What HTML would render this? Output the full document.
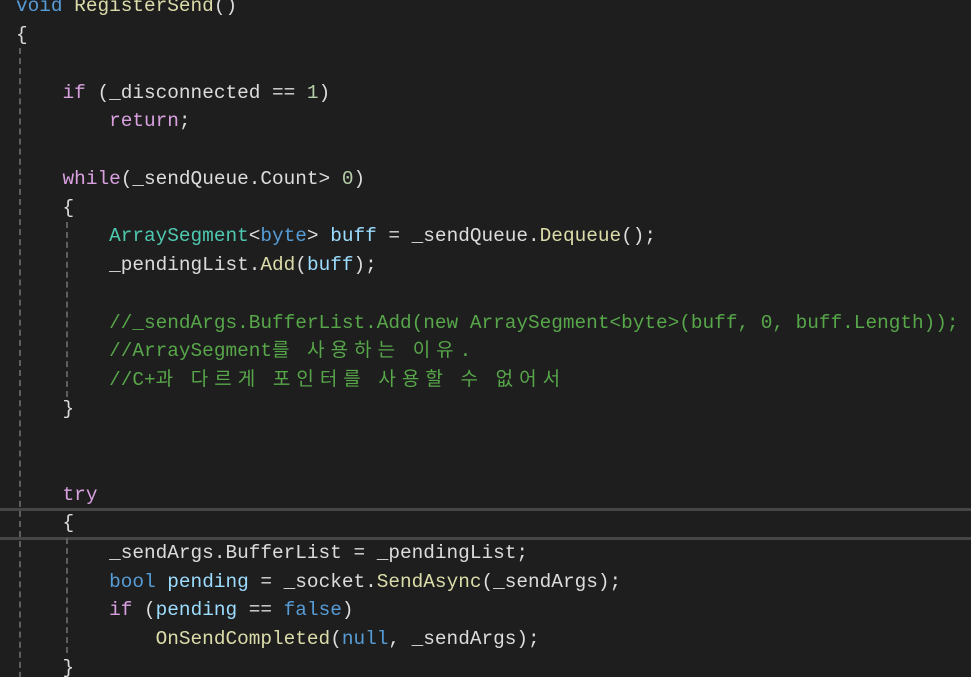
<!DOCTYPE html>
<html><head><meta charset="utf-8"><style>
html,body{margin:0;padding:0;background:#1e1e1e;width:971px;height:677px;overflow:hidden}
body{position:relative;font-family:"Liberation Mono","Noto Sans CJK KR",monospace;font-size:19.4px;color:#dcdcdc}
.l{position:absolute;left:16px;white-space:pre;height:29px;line-height:29px}
.k{color:#569cd6}.c{color:#d8a0df}.t{color:#4ec9b0}.m{color:#dcdcaa}.g{color:#57a64a}.n{color:#b5cea8}.v{color:#9cdcfe}
.h{font-family:"Noto Sans CJK KR",sans-serif;font-size:19px;letter-spacing:6px;line-height:0}
.d{position:absolute;width:0;border-left:2px dashed #5e5e5e}
.cur{position:absolute;left:0;width:971px;top:508px;height:26px;border-top:3px solid #464646;border-bottom:3px solid #464646}
</style></head><body>
<div class="cur"></div>
<div class="d" style="left:19px;top:48px;height:640px"></div>
<div class="d" style="left:66px;top:222px;height:175px"></div>
<div class="d" style="left:66px;top:538px;height:115px"></div>
<div class="l" style="top:-8px"><span class="k">void</span> <span class="m">RegisterSend</span>()</div>
<div class="l" style="top:21px">{</div>
<div class="l" style="top:79px">    <span class="c">if</span> (_disconnected == <span class="n">1</span>)</div>
<div class="l" style="top:107px">        <span class="c">return</span>;</div>
<div class="l" style="top:165px">    <span class="c">while</span>(_sendQueue.Count&gt; <span class="n">0</span>)</div>
<div class="l" style="top:194px">    {</div>
<div class="l" style="top:222px">        <span class="t">ArraySegment</span>&lt;<span class="k">byte</span>&gt; <span class="v">buff</span> = _sendQueue.<span class="m">Dequeue</span>();</div>
<div class="l" style="top:251px">        _pendingList.<span class="m">Add</span>(<span class="v">buff</span>);</div>
<div class="l g" style="top:309px">        //_sendArgs.BufferList.Add(new ArraySegment&lt;byte&gt;(buff, 0, buff.Length));</div>
<div class="l g" style="top:337px">        //ArraySegment<span class="h">를</span> <span class="h">사용하는</span> <span class="h">이유</span>.</div>
<div class="l g" style="top:366px">        //C+<span class="h">과</span> <span class="h">다르게</span> <span class="h">포인터를</span> <span class="h">사용할</span> <span class="h">수</span> <span class="h">없어서</span></div>
<div class="l" style="top:395px">    }</div>
<div class="l" style="top:481px">    <span class="c">try</span></div>
<div class="l" style="top:509px">    {</div>
<div class="l" style="top:539px">        _sendArgs.BufferList = _pendingList;</div>
<div class="l" style="top:568px">        <span class="k">bool</span> <span class="v">pending</span> = _socket.<span class="m">SendAsync</span>(_sendArgs);</div>
<div class="l" style="top:596px">        <span class="c">if</span> (<span class="v">pending</span> == <span class="k">false</span>)</div>
<div class="l" style="top:625px">            <span class="m">OnSendCompleted</span>(<span class="k">null</span>, _sendArgs);</div>
<div class="l" style="top:654px">    }</div>
</body></html>
